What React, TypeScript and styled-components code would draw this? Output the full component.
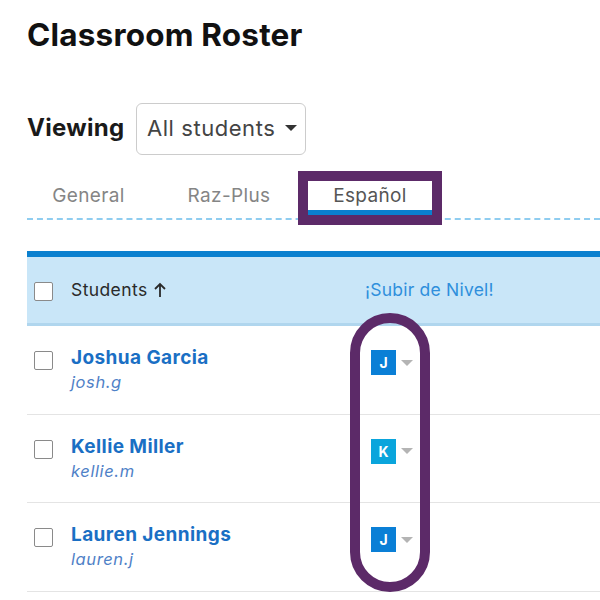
import React from "react";
import styled, { createGlobalStyle } from "styled-components";

const Global = createGlobalStyle`
  html, body { margin: 0; padding: 0; background: #fff; overflow: hidden; }
  body { font-family: Inter, "Open Sans", "Liberation Sans", sans-serif; }
`;

const Page = styled.div`
  position: relative;
  width: 600px;
  height: 600px;
  overflow: hidden;
  padding: 16px 0 0 27px;
  box-sizing: border-box;
`;

const Title = styled.h1`
  margin: 0;
  height: 38px;
  font-size: 31.5px;
  line-height: 37px;
  font-weight: 700;
  color: #111;
  letter-spacing: 0.2px;
`;

const ViewRow = styled.div`
  margin-top: 49px;
  display: flex;
  align-items: center;
  gap: 13px;
`;

const ViewLabel = styled.span`
  font-size: 24px;
  line-height: 26px;
  margin-top: -2px;
  font-weight: 700;
  color: #1a1a1a;
  letter-spacing: 0.3px;
  width: 96px;
`;

const Select = styled.div`
  box-sizing: border-box;
  width: 170px;
  height: 52px;
  border: 1.5px solid #ccc;
  border-radius: 6px;
  display: flex;
  align-items: center;
  justify-content: space-between;
  padding: 0 8px 2px 10px;
  font-size: 22px;
  color: #444;
  letter-spacing: 0.55px;
`;

const Caret = styled.span<{ $color: string; $w: number; $h: number }>`
  width: 0;
  height: 0;
  border-left: ${(p) => p.$w}px solid transparent;
  border-right: ${(p) => p.$w}px solid transparent;
  border-top: ${(p) => p.$h}px solid ${(p) => p.$color};
`;

const Tabs = styled.div`
  margin-top: 16px;
  height: 49px;
  display: flex;
  align-items: flex-start;
  border-bottom: 2px dashed #8fcdf0;
  box-sizing: border-box;
`;

const Tab = styled.div<{ $w: number; $active?: boolean }>`
  box-sizing: border-box;
  width: ${(p) => p.$w}px;
  height: 44px;
  padding-top: 14px;
  text-align: center;
  font-size: 19px;
  line-height: 22px;
  letter-spacing: 0.35px;
  color: ${(p) => (p.$active ? "#555" : "#858585")};
  border-bottom: ${(p) => (p.$active ? "5px solid #0a80cf" : "none")};
`;

const TabHighlight = styled.div`
  position: absolute;
  left: 298px;
  top: 171px;
  width: 144px;
  height: 54px;
  box-sizing: border-box;
  border: 10px solid #5c2a68;
`;

const Table = styled.div`
  margin-top: 31px;
`;

const HeaderRow = styled.div`
  box-sizing: border-box;
  height: 75px;
  background: #c9e6f8;
  border-top: 6px solid #0a80cf;
  border-bottom: 3px solid #b0d6ee;
  display: flex;
  align-items: center;
  padding-left: 7px;
`;

const Checkbox = styled.span`
  box-sizing: border-box;
  flex: none;
  width: 19px;
  height: 19px;
  border: 1.5px solid #8a8a8a;
  border-radius: 2px;
  background: #fff;
`;

const HeaderCheckbox = styled(Checkbox)`
  margin-top: 2px;
`;

const StudentsHead = styled.div`
  margin: -1px 0 0 18px;
  width: 294px;
  display: flex;
  align-items: center;
  gap: 5px;
  font-size: 17.5px;
  letter-spacing: 0.4px;
  color: #2a2a2a;
`;

const LevelHead = styled.div`
  margin-top: -1px;
  font-size: 17.5px;
  letter-spacing: 0.22px;
  color: #2f8fdc;
`;

const Row = styled.div`
  box-sizing: border-box;
  height: 88.5px;
  border-bottom: 1.5px solid #e4e4e4;
  display: flex;
  align-items: flex-start;
  padding: 25px 0 0 7px;
`;

const Student = styled.div`
  margin-left: 18px;
  width: 300px;
  margin-top: -4px;
`;

const Name = styled.div`
  font-size: 19px;
  line-height: 22px;
  font-weight: 700;
  color: #1a6fc4;
  letter-spacing: 0.4px;
`;

const Username = styled.div`
  font-size: 16.5px;
  line-height: 20px;
  margin-top: 3px;
  font-style: italic;
  letter-spacing: 0.6px;
  color: #4f81c7;
`;

const Level = styled.div`
  display: flex;
  align-items: center;
  gap: 5px;
  margin-top: -1px;
`;

const Badge = styled.span<{ $bg: string }>`
  width: 25px;
  height: 25px;
  background: ${(p) => p.$bg};
  color: #fff;
  font-size: 14px;
  font-weight: 700;
  display: flex;
  align-items: center;
  justify-content: center;
`;

const Pill = styled.div`
  position: absolute;
  left: 350px;
  top: 313px;
  width: 80px;
  height: 279px;
  box-sizing: border-box;
  border: 10px solid #5c2a68;
  border-radius: 40px;
`;

const students = [
  { name: "Joshua Garcia", user: "josh.g", level: "J", color: "#0a7fd6" },
  { name: "Kellie Miller", user: "kellie.m", level: "K", color: "#0aa5dc" },
  { name: "Lauren Jennings", user: "lauren.j", level: "J", color: "#0a7fd6" },
];

export default function App() {
  return (
    <Page>
      <Global />
      <Title>Classroom Roster</Title>
      <ViewRow>
        <ViewLabel>Viewing</ViewLabel>
        <Select>
          All students
          <Caret $color="#333" $w={6} $h={6} />
        </Select>
      </ViewRow>
      <Tabs>
        <Tab $w={123}>General</Tab>
        <Tab $w={158}>Raz-Plus</Tab>
        <Tab $w={124} $active>Español</Tab>
      </Tabs>
      <TabHighlight />
      <Table>
        <HeaderRow>
          <HeaderCheckbox />
          <StudentsHead>
            Students
            <svg width="14" height="16" viewBox="0 0 14 16" fill="none" stroke="#2a2a2a" strokeWidth="1.8">
              <path d="M7 15V2M2 7l5-5 5 5" />
            </svg>
          </StudentsHead>
          <LevelHead>¡Subir de Nivel!</LevelHead>
        </HeaderRow>
        {students.map((s) => (
          <Row key={s.name}>
            <Checkbox />
            <Student>
              <Name>{s.name}</Name>
              <Username>{s.user}</Username>
            </Student>
            <Level>
              <Badge $bg={s.color}>{s.level}</Badge>
              <Caret $color="#b4b4b4" $w={6} $h={6} />
            </Level>
          </Row>
        ))}
      </Table>
      <Pill />
    </Page>
  );
}
